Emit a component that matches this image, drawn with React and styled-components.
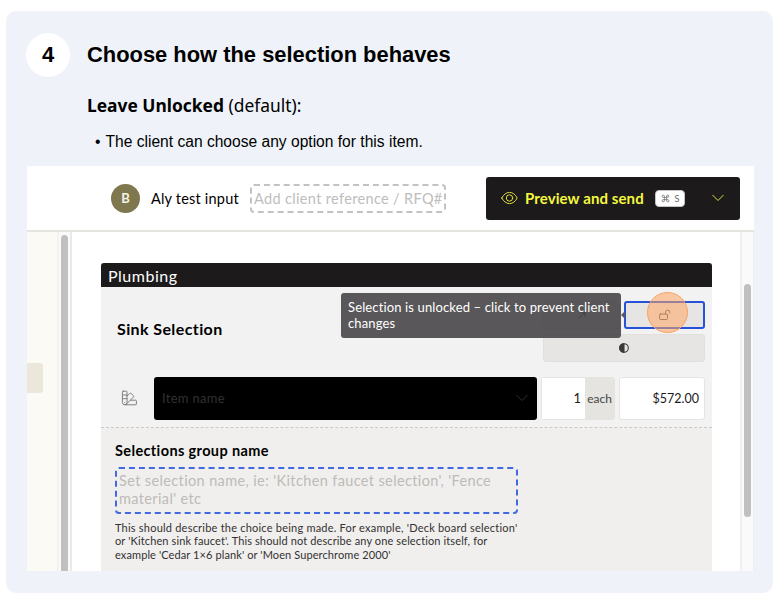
import styled, { createGlobalStyle } from "styled-components";

const GlobalStyle = createGlobalStyle`
  * {
    box-sizing: border-box;
  }
  body {
    margin: 0;
    background: #ffffff;
    font-family: "Liberation Sans", Arial, sans-serif;
    color: #000000;
  }
  h2, h3, p, ul {
    margin: 0;
    padding: 0;
  }
`;

const Step = styled.section`
  width: 767px;
  height: 582px;
  margin: 11px 0 0 6px;
  padding: 22px 19px 0 20px;
  border-radius: 10px;
  background: #eff3f9;
`;

const StepHead = styled.div`
  display: flex;
  align-items: center;
  gap: 17px;
  height: 44px;
`;

const StepNumber = styled.div`
  display: flex;
  align-items: center;
  justify-content: center;
  width: 44px;
  height: 44px;
  border-radius: 50%;
  background: #ffffff;
  font-size: 22px;
  font-weight: bold;
`;

const Title = styled.h2`
  font-size: 21.9px;
  line-height: 44px;
  font-weight: bold;
  white-space: nowrap;
`;

const Subtitle = styled.p`
  margin: 15px 0 0 61px;
  font-family: "Noto Sans", sans-serif;
  font-size: 17.4px;
  line-height: 26px;
  white-space: nowrap;
`;

const Bullets = styled.ul`
  display: flex;
  gap: 5px;
  margin: 14px 0 0 69px;
  list-style: none;
  font-size: 15.6px;
  line-height: 20px;
  white-space: nowrap;
`;

const Shot = styled.div`
  display: flex;
  flex-direction: column;
  width: 727px;
  height: 405px;
  margin: 14px 0 0 1px;
  overflow: hidden;
  background: #ffffff;
  font-family: Lato, sans-serif;
`;

const Text = styled.span`
  display: block;
  font-size: ${(p) => p.$size}px;
  font-weight: ${(p) => p.$weight || 400};
  letter-spacing: ${(p) => p.$spacing || 0}px;
  color: ${(p) => p.$color || "#1c1a1b"};
  white-space: nowrap;
`;

const TopBar = styled.header`
  display: flex;
  align-items: center;
  flex: none;
  height: 66px;
  padding: 0 14px 0 84px;
  border-bottom: 2px solid #e6e4df;
`;

const Avatar = styled.div`
  display: flex;
  align-items: center;
  justify-content: center;
  width: 29px;
  height: 29px;
  margin-right: 11px;
  border-radius: 50%;
  background: #7f774d;
`;

const ReferenceField = styled.div`
  display: flex;
  align-items: center;
  width: 196px;
  height: 29px;
  margin-left: auto;
  padding-left: 2px;
  border: 2px dashed #c2c2c2;
  border-radius: 4px;
`;

const ClientName = styled.div`
  width: 99px;
`;

const SendButton = styled.div`
  display: flex;
  align-items: center;
  width: 254px;
  height: 43px;
  margin-left: 40px;
  padding: 0 16px 0 15px;
  border-radius: 3px;
  background: #1c1a1b;
`;

const SendLabel = styled.div`
  width: 130px;
  margin-left: 7px;
`;

const Shortcut = styled.div`
  display: flex;
  align-items: center;
  justify-content: center;
  gap: 5px;
  width: 30px;
  height: 17px;
  margin-right: auto;
  border: 1px solid #c4c4c4;
  border-radius: 4px;
  background: #ffffff;
`;

const Main = styled.div`
  display: flex;
  flex: 1;
  min-height: 0;
`;

const Rail = styled.div`
  width: 30px;
  padding-top: 131px;
  background: #fbfaf5;
`;

const RailTab = styled.div`
  width: 16px;
  height: 30px;
  border-radius: 0 3px 3px 0;
  background: #ebe7da;
`;

const LeftTrack = styled.div`
  width: 15px;
  padding: 3px 2px 0 2px;
  border-left: 2px solid #f2f2f0;
  border-right: 2px solid #e9e9e7;
  background: #fafafa;
`;

const LeftThumb = styled.div`
  width: 7px;
  height: 100%;
  border-radius: 4px 4px 0 0;
  background: #c0c0c0;
`;

const RightTrack = styled.div`
  width: 14px;
  margin-left: auto;
  padding: 52px 0 0 2px;
  border-left: 2px solid #f0f0f0;
  border-right: 1px solid #eeeeee;
  background: #fafafa;
`;

const RightThumb = styled.div`
  width: 7px;
  height: 233px;
  border-radius: 4px;
  background: #c0c0c0;
`;

const Section = styled.div`
  display: flex;
  flex-direction: column;
  width: 611px;
  margin: 31px 0 0 29px;
  background: #f0efed;
`;

const SectionHead = styled.div`
  display: flex;
  align-items: center;
  flex: none;
  height: 24px;
  padding-left: 7px;
  border-radius: 3px 3px 0 0;
  background: #1c1a1b;
`;

const Item = styled.div`
  flex: none;
  height: 141px;
  border-bottom: 1px dashed #c9c9c9;
  background: #f2f2f2;
`;

const ItemTop = styled.div`
  display: flex;
  justify-content: space-between;
  height: 89px;
  padding: 14px 7px 0 16px;
`;

const ItemTitle = styled.div`
  padding-top: 18px;
`;

const Actions = styled.div`
  display: grid;
  grid-template-columns: 77px 81px;
  grid-template-rows: 28px 28px;
  gap: 5px 4px;
`;

const Action = styled.div`
  position: relative;
  display: flex;
  align-items: center;
  justify-content: center;
  grid-column: ${(p) => (p.$wide ? "1 / -1" : "auto")};
  border: ${(p) => (p.$focused ? "2px solid #2651d9" : "1px solid #e1e0de")};
  border-radius: 3px;
  background: #e6e5e3;
`;

const Tooltip = styled.div`
  position: absolute;
  top: -10px;
  right: 82px;
  z-index: 1;
  display: flex;
  flex-direction: column;
  width: 280px;
  height: 45px;
  padding: 6px 7px 0;
  border-radius: 3px;
  background: rgba(72, 70, 72, 0.9);
  line-height: 16px;

  &::after {
    content: "";
    position: absolute;
    top: 18px;
    right: -4px;
    border-top: 4px solid transparent;
    border-bottom: 4px solid transparent;
    border-right: 4px solid #5c5a5c;
  }
`;

const ClickMark = styled.div`
  position: absolute;
  top: -11px;
  left: 21px;
  width: 41px;
  height: 41px;
  border: 1.5px solid #f8a364;
  border-radius: 50%;
  background: rgba(255, 164, 97, 0.54);
`;

const ItemRow = styled.div`
  display: flex;
  align-items: center;
  height: 44px;
  padding: 0 7px 0 20px;
`;

const ItemSelect = styled.div`
  display: flex;
  align-items: center;
  justify-content: space-between;
  width: 383px;
  height: 43px;
  margin-left: 16px;
  padding: 0 9px 0 8px;
  border-radius: 3px;
  background: #000000;
`;

const Quantity = styled.div`
  display: flex;
  width: 74px;
  height: 43px;
  margin-left: 4px;
  border: 1px solid #e5e4e1;
  border-radius: 3px;
  background: #e5e4e0;
`;

const QuantityValue = styled.div`
  display: flex;
  align-items: center;
  justify-content: flex-end;
  width: 43px;
  padding-right: 4px;
  background: #ffffff;
`;

const Unit = styled.div`
  display: flex;
  align-items: center;
  justify-content: center;
  flex: 1;
`;

const Price = styled.div`
  display: flex;
  align-items: center;
  justify-content: flex-end;
  width: 86px;
  height: 43px;
  margin-left: auto;
  padding-right: 5px;
  border: 1.5px solid #e5e4e1;
  border-radius: 3px;
  background: #ffffff;
`;

const Group = styled.div`
  display: flex;
  flex-direction: column;
  padding: 14px 0 0 14px;
  line-height: 18px;
`;

const GroupField = styled.div`
  display: flex;
  flex-direction: column;
  width: 403px;
  height: 47px;
  margin: 7px 0 7px;
  padding: 3px 2px 0;
  border: 2px dashed #4169e0;
  border-radius: 4px;
`;

const Help = styled.div`
  display: flex;
  flex-direction: column;
  line-height: 13.4px;
`;

const Icon = styled.svg`
  display: block;
  flex: none;
  fill: none;
  stroke: ${(p) => p.$stroke || "#3a3839"};
  stroke-width: ${(p) => p.$line || 1};
  stroke-linecap: round;
  stroke-linejoin: round;
`;

function EyeIcon() {
  return (
    <Icon width="17" height="14" viewBox="0 0 17 14" $stroke="#d9dc3c">
      <path d="M.8 7C2.6 3.500 5.300 1.400 8.500 1.400S14.400 3.500 16.200 7C14.400 10.500 11.700 12.600 8.500 12.600S2.600 10.500 .8 7Z" />
      <circle cx="8.500" cy="7" r="3.200" />
    </Icon>
  );
}

function CommandIcon() {
  return (
    <Icon width="9" height="9" viewBox="0 0 24 24" $stroke="#777777" $line={2.2}>
      <path d="M15 6v12a3 3 0 1 0 3-3H6a3 3 0 1 0 3 3V6a3 3 0 1 0-3 3h12a3 3 0 1 0-3-3" />
    </Icon>
  );
}

function ChevronIcon({ stroke }) {
  return (
    <Icon width="12" height="8" viewBox="0 0 12 8" $stroke={stroke}>
      <path d="M.7 1.200 6 6.500l5.300-5.300" />
    </Icon>
  );
}

function ArrowIcon() {
  return (
    <Icon width="8" height="8" viewBox="0 0 8 8" $stroke="#000000">
      <path d="M1 7 7 1M2.500 1H7v4.500" />
    </Icon>
  );
}

function UnlockIcon() {
  return (
    <Icon width="12" height="12" viewBox="0 0 12 12" $stroke="#5b5552">
      <rect x=".6" y="5" width="7.900" height="5.500" rx="1" />
      <path d="M6.600 5V3.200a2.100 2.100 0 0 1 4.200 0v.8" />
    </Icon>
  );
}

function ContrastIcon() {
  return (
    <Icon width="10" height="10" viewBox="0 0 10 10" $line={1.1}>
      <circle cx="5" cy="5" r="4.300" />
      <path d="M5 .7a4.300 4.300 0 0 0 0 8.600Z" fill="#3a3839" />
    </Icon>
  );
}

function SwatchIcon() {
  return (
    <Icon width="17" height="16" viewBox="0 0 17 16" $stroke="#777577" $line={0.9}>
      <path d="M2.200 1.200h3q.8 0 .8.8v10.500a2.300 2.300 0 0 1-4.600 0V2q0-.8.8-.8Z" />
      <path d="M1.400 5H6M1.400 8.700H6M6 6l2.700-2.500q.8-.7 1.500 0l2.200 2.200q.7.7 0 1.400L5.300 14.200M9.600 10.200h5q.8 0 .8.800v3q0 .8-.8.800H3.700" />
      <path d="M3.700 12.400v.1" />
    </Icon>
  );
}

const helpLines = [
  { text: "This should describe the choice being made. For example, 'Deck board selection'", spacing: 0.22 },
  { text: "or 'Kitchen sink faucet'. This should not describe any one selection itself, for", spacing: 0.12 },
  { text: "example 'Cedar 1×6 plank' or 'Moen Superchrome 2000'", spacing: 0.1 },
];

function App() {
  return (
    <>
      <GlobalStyle />
      <Step>
        <StepHead>
          <StepNumber>4</StepNumber>
          <Title>Choose how the selection behaves</Title>
        </StepHead>
        <Subtitle>
          <b>Leave Unlocked</b> (default):
        </Subtitle>
        <Bullets>
          <span>•</span>
          <li>The client can choose any option for this item.</li>
        </Bullets>
        <Shot>
          <TopBar>
            <Avatar>
              <Text $size={13} $weight={700} $color="#f4f2e8">B</Text>
            </Avatar>
            <ClientName>
              <Text $size={14.5} $spacing={0.2} $color="#000000">Aly test input</Text>
            </ClientName>
            <ReferenceField>
              <Text $size={14.5} $spacing={0.34} $color="#bdbdbd">Add client reference / RFQ#</Text>
            </ReferenceField>
            <SendButton>
              <EyeIcon />
              <SendLabel>
                <Text $size={15} $weight={700} $spacing={0.1} $color="#f4f83f">Preview and send</Text>
              </SendLabel>
              <Shortcut>
                <CommandIcon />
                <Text $size={9} $color="#666666">S</Text>
              </Shortcut>
              <ChevronIcon stroke="#d9dc3c" />
            </SendButton>
          </TopBar>
          <Main>
            <Rail>
              <RailTab />
            </Rail>
            <LeftTrack>
              <LeftThumb />
            </LeftTrack>
            <Section>
              <SectionHead>
                <Text $size={16} $spacing={0.5} $color="#ffffff">Plumbing</Text>
              </SectionHead>
              <Item>
                <ItemTop>
                  <ItemTitle>
                    <Text $size={16} $weight={700} $spacing={0.4} $color="#000000">Sink Selection</Text>
                  </ItemTitle>
                  <Actions>
                    <Action>
                      <ArrowIcon />
                    </Action>
                    <Action $focused>
                      <UnlockIcon />
                      <ClickMark />
                      <Tooltip>
                        <Text $size={13} $spacing={0.13} $color="#ffffff">Selection is unlocked – click to prevent client</Text>
                        <Text $size={13} $spacing={0.13} $color="#ffffff">changes</Text>
                      </Tooltip>
                    </Action>
                    <Action $wide>
                      <ContrastIcon />
                    </Action>
                  </Actions>
                </ItemTop>
                <ItemRow>
                  <SwatchIcon />
                  <ItemSelect>
                    <Text $size={13} $spacing={0.3} $color="#303030">Item name</Text>
                    <ChevronIcon stroke="#303030" />
                  </ItemSelect>
                  <Quantity>
                    <QuantityValue>
                      <Text $size={13}>1</Text>
                    </QuantityValue>
                    <Unit>
                      <Text $size={12} $color="#444444">each</Text>
                    </Unit>
                  </Quantity>
                  <Price>
                    <Text $size={12.5}>$572.00</Text>
                  </Price>
                </ItemRow>
              </Item>
              <Group>
                <Text $size={14.5} $weight={700} $spacing={0.37} $color="#000000">Selections group name</Text>
                <GroupField>
                  <Text $size={14.5} $spacing={0.37} $color="#bdbbb9">Set selection name, ie: 'Kitchen faucet selection', 'Fence</Text>
                  <Text $size={14.5} $spacing={0.37} $color="#bdbbb9">material' etc</Text>
                </GroupField>
                <Help>
                  {helpLines.map((line) => (
                    <Text key={line.text} $size={11} $spacing={line.spacing} $color="#333132">
                      {line.text}
                    </Text>
                  ))}
                </Help>
              </Group>
            </Section>
            <RightTrack>
              <RightThumb />
            </RightTrack>
          </Main>
        </Shot>
      </Step>
    </>
  );
}

export default App;
